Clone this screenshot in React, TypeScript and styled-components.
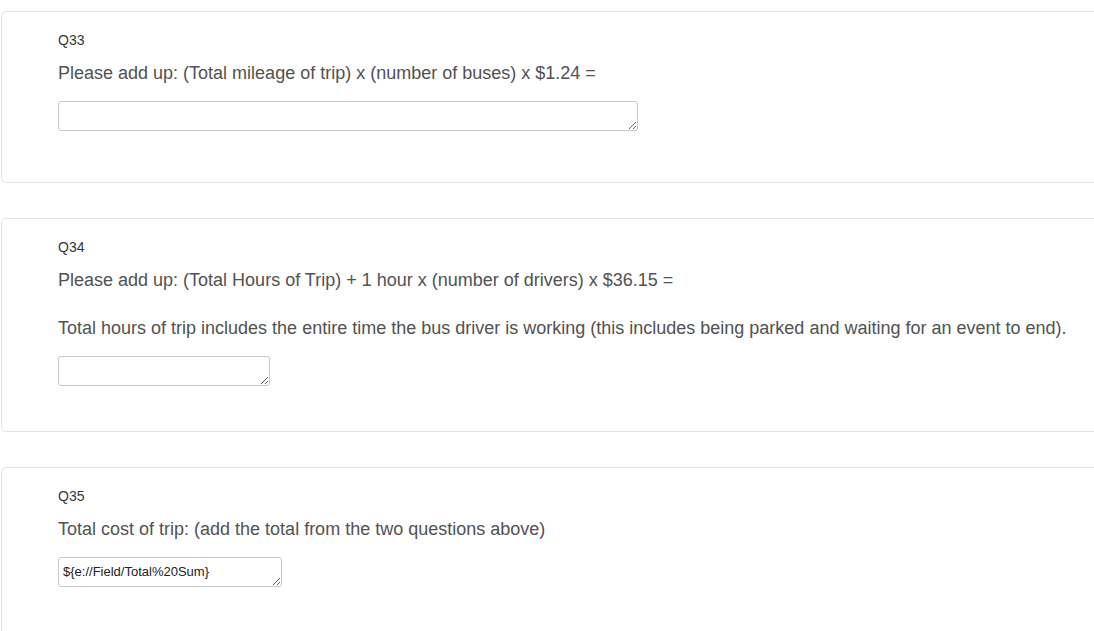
import React from "react";
import styled, { createGlobalStyle } from "styled-components";

const GlobalStyle = createGlobalStyle`
  html, body {
    margin: 0;
    padding: 0;
    background: #ffffff;
  }
  body {
    font-family: "Liberation Sans", Arial, sans-serif;
    overflow: hidden;
  }
`;

const Page = styled.main`
  display: flex;
  flex-direction: column;
  gap: 35px;
  padding: 11px 0 0 1px;
  overflow: hidden;
  height: 631px;
  box-sizing: border-box;
`;

const Card = styled.section<{ $padBottom: number }>`
  flex: none;
  display: flex;
  flex-direction: column;
  align-items: flex-start;
  margin-right: -12px;
  padding: 19px 56px ${(p) => p.$padBottom}px 56px;
  border: 1px solid #e3e3e3;
  border-radius: 5px;
  background: #ffffff;
`;

const QLabel = styled.div`
  font-size: 14px;
  line-height: 18px;
  color: #363636;
`;

const QText = styled.div`
  margin-top: 12px;
  font-size: 18px;
  line-height: 24px;
  color: #525252;
  white-space: nowrap;
`;

const Answer = styled.textarea<{ $width: number }>`
  box-sizing: border-box;
  margin: 16px 0 0 0;
  width: ${(p) => p.$width}px;
  height: 30px;
  padding: 6px 4px;
  border: 1px solid #c9c9c9;
  border-radius: 3px;
  font-family: "Liberation Sans", Arial, sans-serif;
  font-size: 13px;
  line-height: 15px;
  color: #222222;
  background: #ffffff;
  resize: both;
  outline: none;
  display: block;
`;

type Question = {
  id: string;
  lines: string[];
  width: number;
  value?: string;
  padBottom: number;
};

const questions: Question[] = [
  {
    id: "Q33",
    lines: ["Please add up: (Total mileage of trip) x (number of buses) x $1.24 ="],
    width: 580,
    padBottom: 51,
  },
  {
    id: "Q34",
    lines: [
      "Please add up: (Total Hours of Trip) + 1 hour x (number of drivers) x $36.15 =",
      "Total hours of trip includes the entire time the bus driver is working (this includes being parked and waiting for an event to end).",
    ],
    width: 212,
    padBottom: 45,
  },
  {
    id: "Q35",
    lines: ["Total cost of trip: (add the total from the two questions above)"],
    width: 224,
    value: "${e://Field/Total%20Sum}",
    padBottom: 60,
  },
];

export default function App() {
  return (
    <>
      <GlobalStyle />
      <Page>
        {questions.map((q) => (
          <Card key={q.id} $padBottom={q.padBottom}>
            <QLabel>{q.id}</QLabel>
            <QText>
              {q.lines.map((l, i) => (
                <React.Fragment key={i}>
                  {i > 0 && (
                    <>
                      <br />
                      <br />
                    </>
                  )}
                  {l}
                </React.Fragment>
              ))}
            </QText>
            <Answer $width={q.width} defaultValue={q.value ?? ""} />
          </Card>
        ))}
      </Page>
    </>
  );
}
